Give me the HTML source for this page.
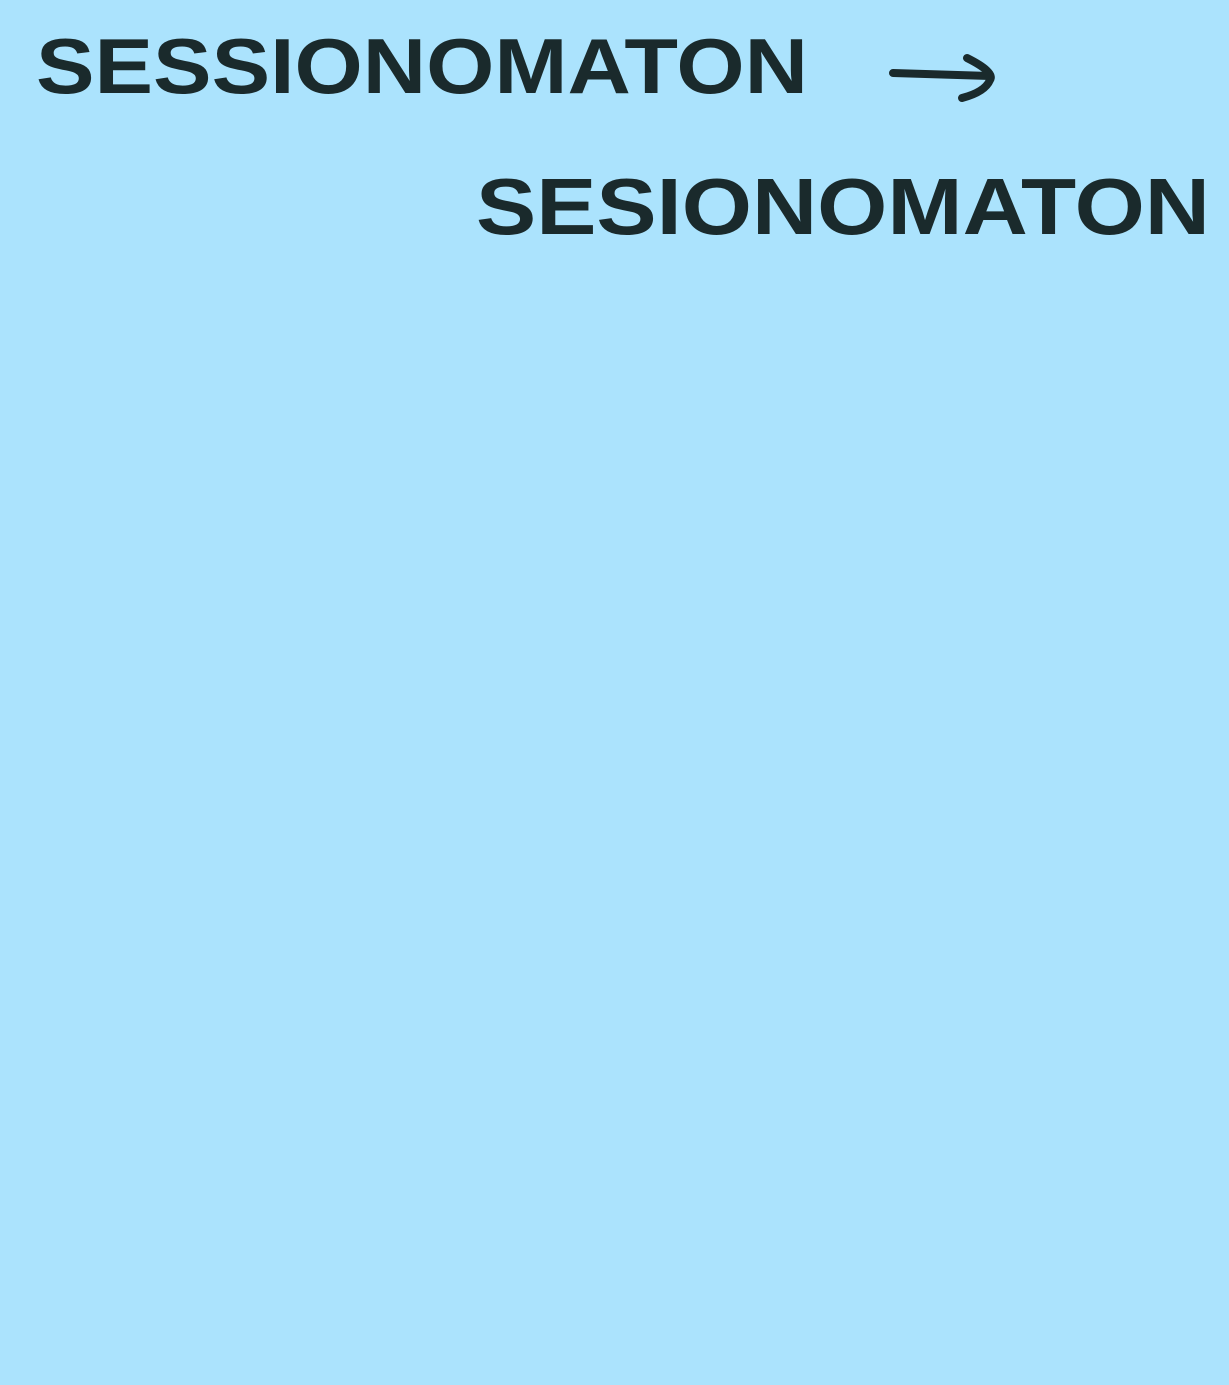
<!DOCTYPE html>
<html><head><meta charset="utf-8"><style>
html,body{margin:0;padding:0;background:#abe3fd;}
svg{display:block}
</style></head><body>
<svg width="1229" height="1385" viewBox="0 0 1229 1385" xmlns="http://www.w3.org/2000/svg">
<rect width="1229" height="1385" fill="#abe3fd"/>
<g fill="#1a2a2c" font-family="'Liberation Sans', sans-serif" font-weight="bold">
<text x="36" y="93" font-size="78" textLength="772" lengthAdjust="spacingAndGlyphs">SESSIONOMATON</text>
<text x="476" y="234" font-size="80" textLength="734" lengthAdjust="spacingAndGlyphs">SESIONOMATON</text>
</g>
<g stroke="#1a2a2c" stroke-width="8" fill="none" stroke-linecap="round" stroke-linejoin="round">
<path d="M893 73 L990 76"/>
<path d="M967 58 Q995 72 990 80 Q985 92 962 98"/>
</g>
</svg>
</body></html>
